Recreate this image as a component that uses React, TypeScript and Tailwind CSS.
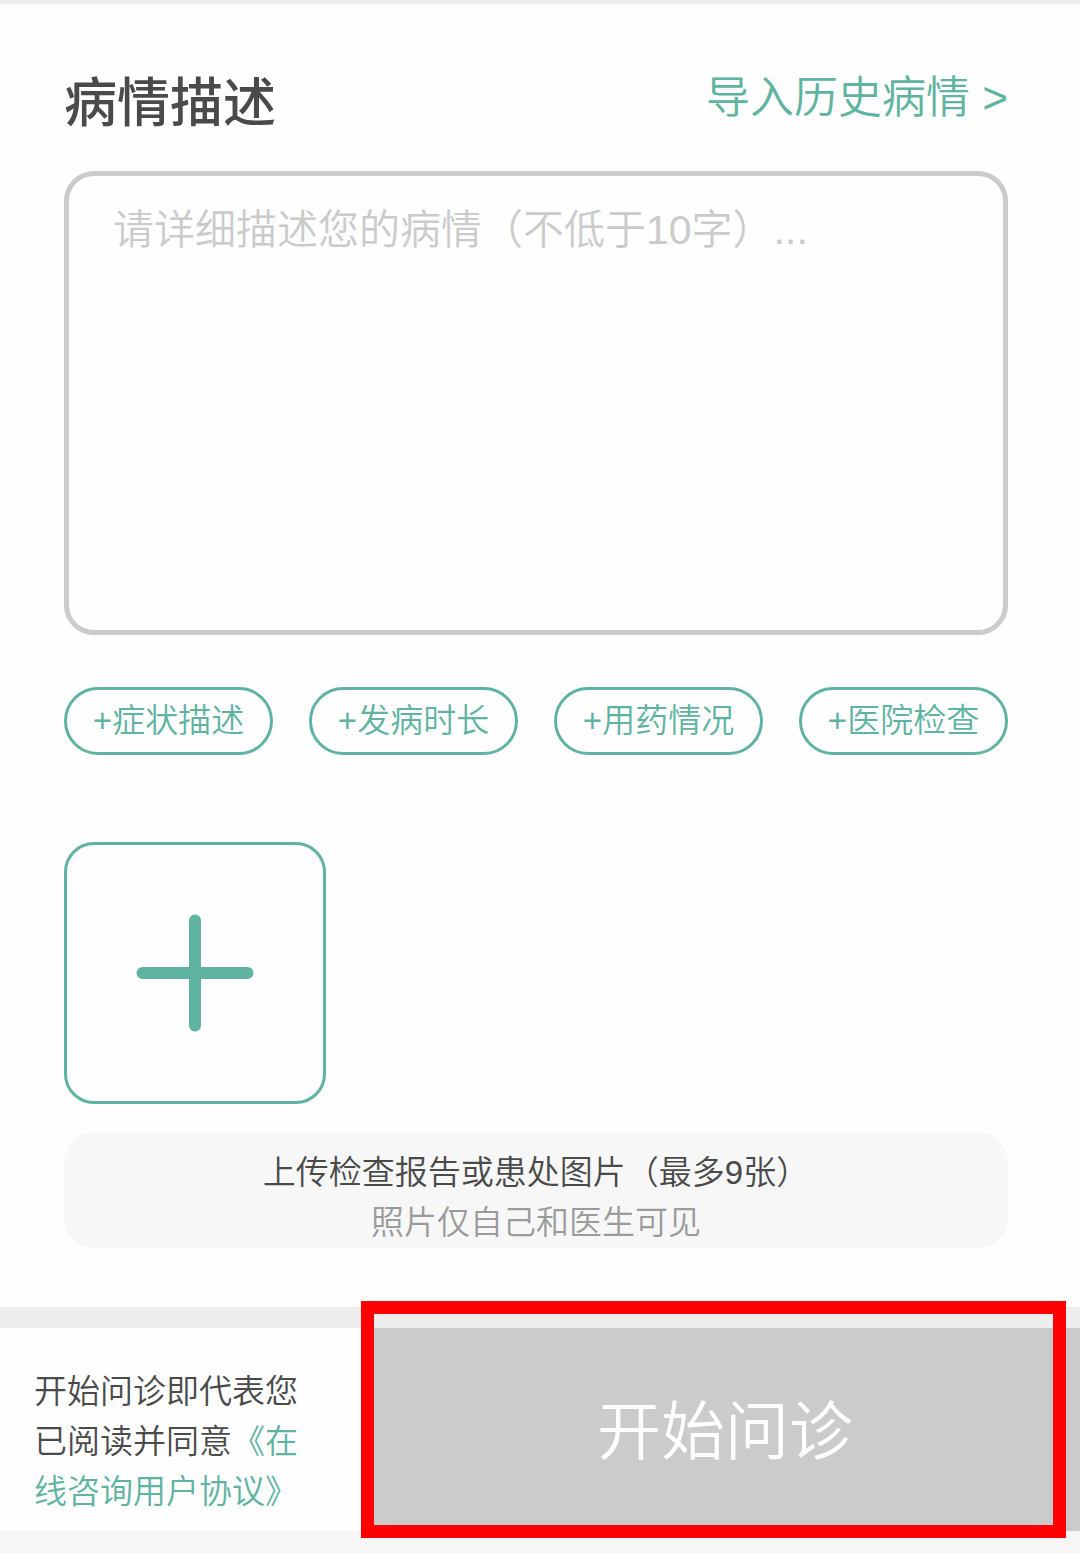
import { useState } from "react";

const tags = ["症状描述", "发病时长", "用药情况", "医院检查"];

export default function ConsultPage() {
  const [description, setDescription] = useState("");

  const addTag = (tag: string) => {
    setDescription((prev) => (prev ? `${prev}\n${tag}:` : `${tag}:`));
  };

  return (
    <div
      lang="zh-CN"
      className="flex min-h-screen flex-col bg-[#f6f6f6] font-['Liberation_Sans','Noto_Sans_CJK_SC',sans-serif] font-[350] text-[#4a4a4a]"
    >
      <main className="border-t-4 border-[#ededed] bg-[#fefefe] pt-16 pr-18 pb-[59px] pl-16">
        <div className="flex items-start justify-between">
          <h1 className="text-[53px] leading-[72px] font-medium">
            <label htmlFor="description">病情描述</label>
          </h1>
          <a href="#history" className="text-[44px] leading-[60px] text-[#5fb3a1]">
            导入历史病情 &gt;
          </a>
        </div>

        <textarea
          id="description"
          value={description}
          onChange={(e) => setDescription(e.target.value)}
          placeholder="请详细描述您的病情（不低于10字）..."
          className="mt-[31px] block h-[464px] w-full resize-none rounded-[30px] border-5 border-[#cbcbcb] px-11 py-6 text-[41px] leading-[60px] outline-none placeholder:text-[#cbcbcb]"
        />

        <div className="mt-[52px] grid grid-cols-4 gap-9">
          {tags.map((tag) => (
            <button
              key={tag}
              type="button"
              onClick={() => addTag(tag)}
              className="h-17 rounded-full border-3 border-[#5fb3a1] text-[33px] leading-[50px] whitespace-nowrap text-[#5fb3a1]"
            >
              +{tag}
            </button>
          ))}
        </div>

        <button
          type="button"
          aria-label="上传图片"
          className="mt-[87px] flex size-[262px] items-center justify-center rounded-[30px] border-3 border-[#5fb3a1] text-[#5fb3a1]"
        >
          <svg
            viewBox="0 0 118 118"
            className="size-[118px]"
            stroke="currentColor"
            strokeWidth="12"
            strokeLinecap="round"
          >
            <path d="M59 6.5v105M6.5 59h105" />
          </svg>
        </button>

        <div className="mt-7 rounded-[30px] bg-[#f7f7f7] pt-4 text-center text-[33px] leading-[50px]">
          <p>上传检查报告或患处图片（最多9张）</p>
          <p className="text-[#9b9b9b]">照片仅自己和医生可见</p>
        </div>
      </main>

      <footer className="flex border-t-21 border-[#ededed] bg-[#fefefe]">
        <p className="w-[370px] shrink-0 pt-[39px] pr-16 pb-3.5 pl-[34px] text-[33px] leading-[50px]">
          开始问诊即代表您已阅读并同意
          <a href="#agreement" className="text-[#5fb3a1]">
            《在线咨询用户协议》
          </a>
        </p>
        <div className="relative flex flex-1">
          <button type="button" className="flex-1 bg-[#cbcbcb] pt-1 text-[64px] text-white">
            开始问诊
          </button>
          {/* highlight around the start button */}
          <div className="pointer-events-none absolute -top-[27px] right-3.5 -bottom-[7px] -left-[9px] border-13 border-[#ff0000]" />
        </div>
      </footer>
    </div>
  );
}
